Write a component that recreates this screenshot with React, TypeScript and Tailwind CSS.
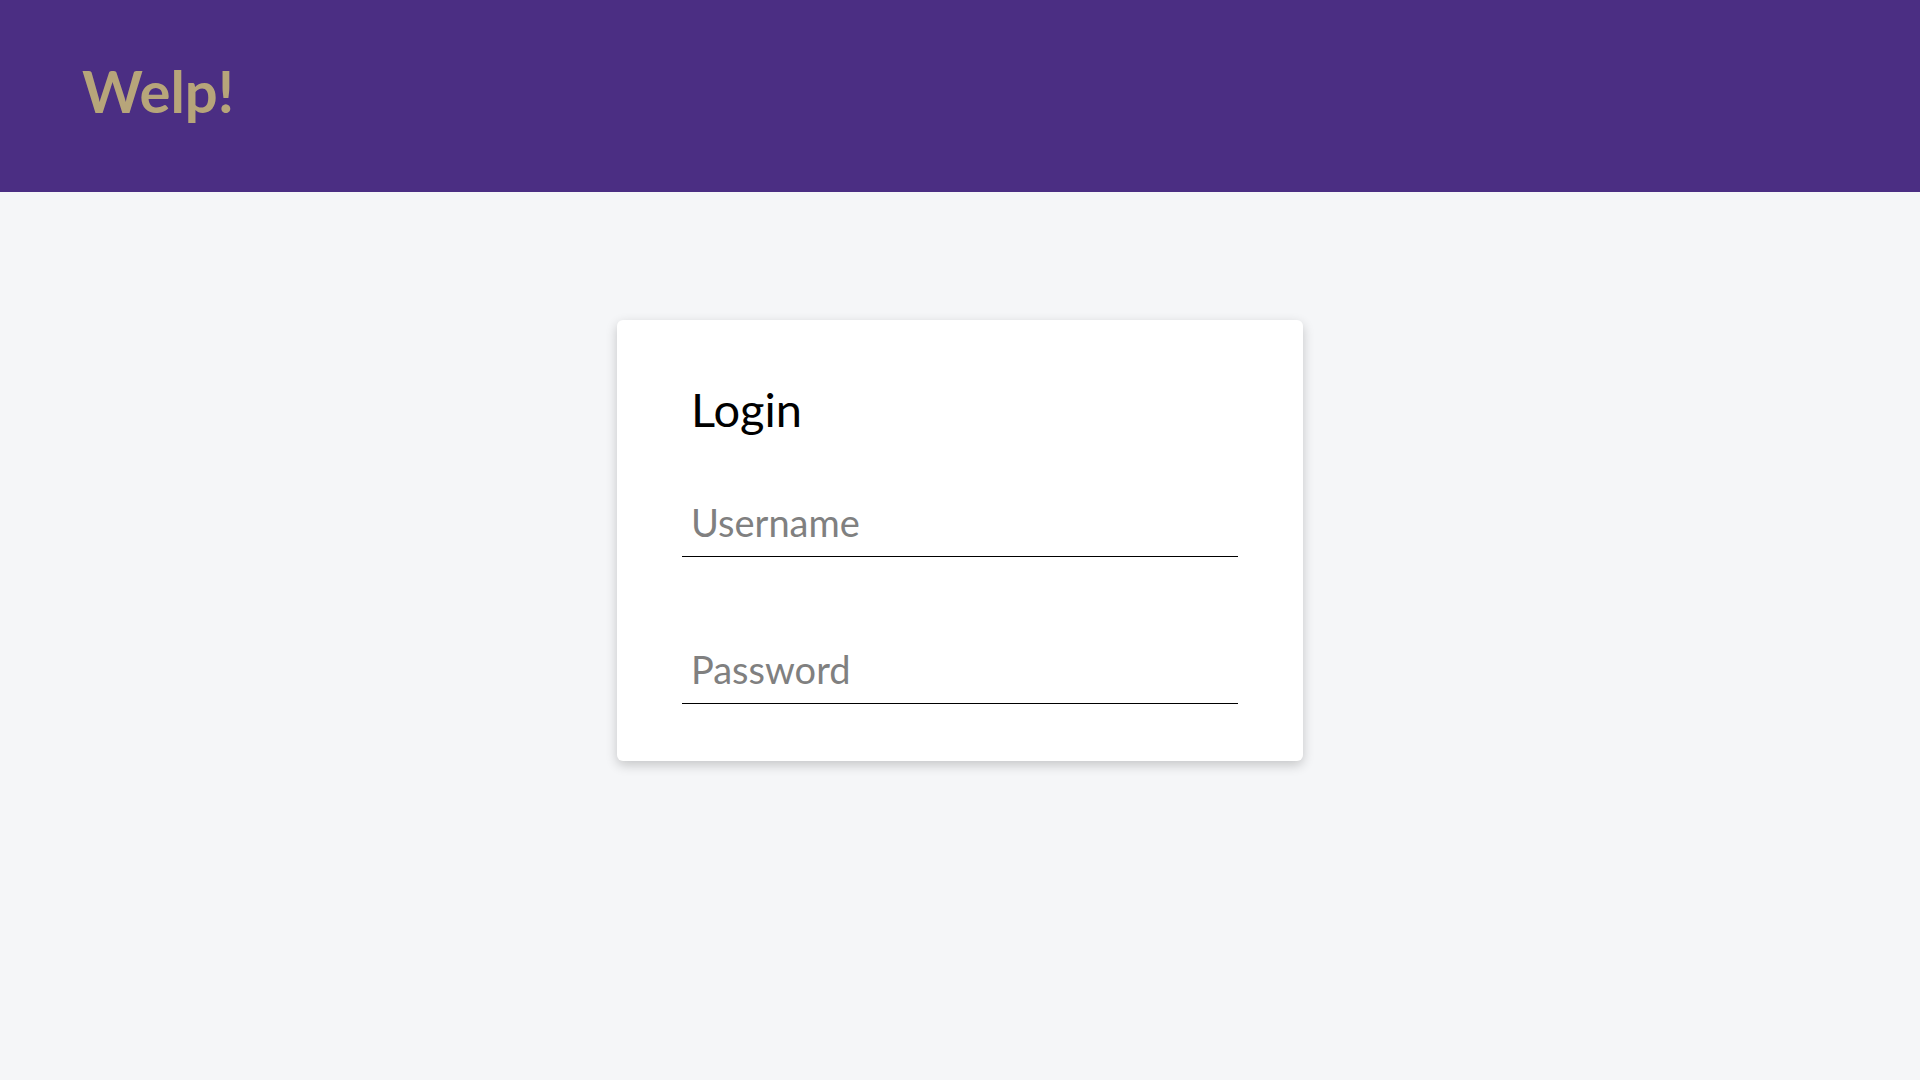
import React from "react";

export default function App() {
  return (
    <div className="min-h-screen bg-[#f5f6f8]" style={{ fontFamily: "Lato, 'Noto Sans', sans-serif" }}>
      <header className="h-[192px] bg-[#4b2e83] flex items-center pl-[82px]">
        <h1 className="text-[58px] font-bold leading-none text-[#b7a57a] -mt-[10px]">Welp!</h1>
      </header>
      <main className="flex justify-center pt-[128px]">
        <div className="w-[686px] bg-white rounded-[6px] shadow-[0_4px_12px_rgba(0,0,0,0.2)] px-[65px] pt-[66px] pb-[57px]">
          <h2 className="text-[47px] leading-none text-black pl-[9px]">Login</h2>
          <div className="mt-[66px] flex flex-col gap-[89px]">
            <input
              type="text"
              placeholder="Username"
              className="w-full h-[58px] border-0 border-b border-black bg-transparent px-[9px] pt-0 pb-[12px] text-[38px] text-black placeholder:text-[#808080] outline-none"
            />
            <input
              type="password"
              placeholder="Password"
              className="w-full h-[58px] border-0 border-b border-black bg-transparent px-[9px] pt-0 pb-[12px] text-[38px] text-black placeholder:text-[#808080] outline-none"
            />
          </div>
        </div>
      </main>
    </div>
  );
}
